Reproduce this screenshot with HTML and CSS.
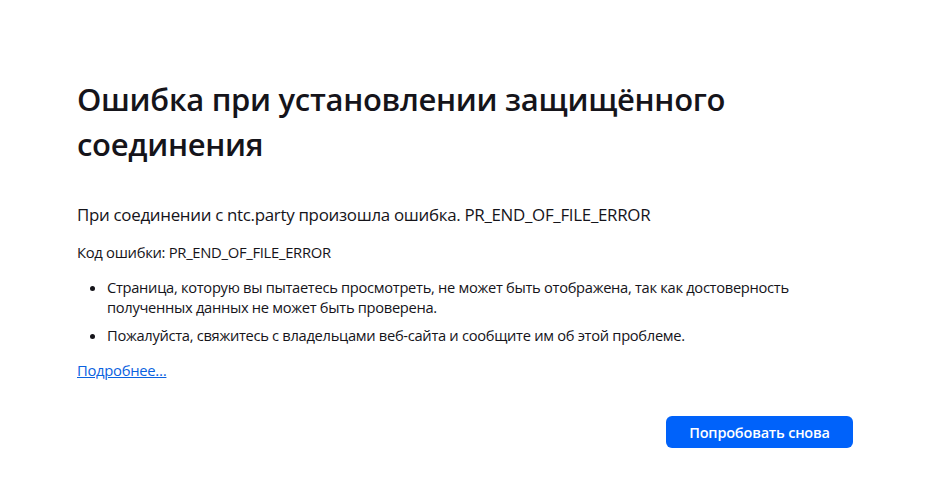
FILE: index.html
```html
<!DOCTYPE html>
<html lang="ru">
<head>
<meta charset="utf-8">
<title>Ошибка при установлении защищённого соединения</title>
<link rel="stylesheet" href="styles.css">
</head>
<body>
<main class="container">
  <h1 class="title">Ошибка при установлении защищённого соединения</h1>
  <p class="intro">При соединении с ntc.party произошла ошибка. PR_END_OF_FILE_ERROR</p>
  <p class="code">Код ошибки: PR_END_OF_FILE_ERROR</p>
  <ul class="list">
    <li>Страница, которую вы пытаетесь просмотреть, не может быть отображена, так как достоверность полученных данных не может быть проверена.</li>
    <li>Пожалуйста, свяжитесь с владельцами веб-сайта и сообщите им об этой проблеме.</li>
  </ul>
  <p class="more-wrap"><a class="more" href="#">Подробнее…</a></p>
  <div class="actions">
    <button class="retry" type="button">Попробовать снова</button>
  </div>
</main>
</body>
</html>
```
FILE: styles.css
```css
html, body {
  margin: 0;
  padding: 0;
  background: #ffffff;
}
body {
  font-family: "Open Sans", "Noto Sans", sans-serif;
  color: #15141a;
}
.container {
  width: 776px;
  margin-left: 77px;
  padding-top: 77px;
}
.title {
  margin: 0;
  font-size: 31px;
  font-weight: 600;
  line-height: 45px;
  letter-spacing: -0.3px;
}
.intro {
  margin: 37px 0 0;
  font-size: 16.9px;
  line-height: 22px;
  letter-spacing: -0.3px;
}
.code {
  margin: 16px 0 0;
  font-size: 14.8px;
  line-height: 20px;
  letter-spacing: -0.3px;
}
.list {
  margin: 15px 0 0;
  padding-left: 30px;
  font-size: 14.7px;
  line-height: 20px;
  letter-spacing: -0.3px;
}
.list li + li {
  margin-top: 8px;
}
.more-wrap {
  margin: 15px 0 0;
  font-size: 14.8px;
  line-height: 20px;
  letter-spacing: -0.3px;
}
.more {
  color: #0a62e0;
}
.actions {
  display: flex;
  justify-content: flex-end;
  margin-top: 36px;
}
.retry {
  width: 187px;
  height: 32px;
  border: none;
  border-radius: 6px;
  background: #0062fa;
  color: #ffffff;
  font-family: inherit;
  font-size: 14.5px;
  font-weight: 600;
  letter-spacing: -0.2px;
}
```
